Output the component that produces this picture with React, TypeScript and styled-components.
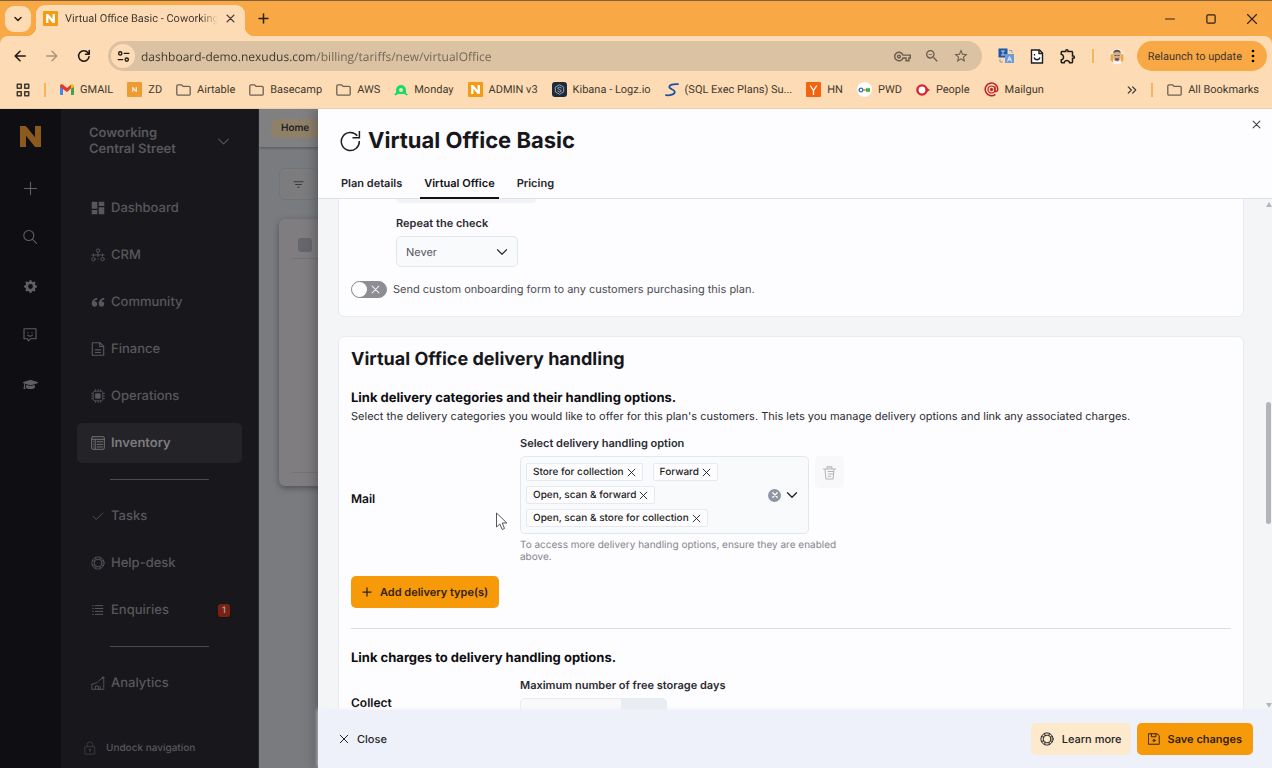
import React from "react";
import styled, { createGlobalStyle } from "styled-components";
import {
  MdDashboard,
  MdFilterList,
  MdOutlineExtension,
  MdOutlineVpnKey,
  MdStarBorder,
  MdZoomOut,
} from "react-icons/md";
import { ImQuotesLeft } from "react-icons/im";
import { BsGearFill } from "react-icons/bs";
import { FaGraduationCap } from "react-icons/fa";

const Global = createGlobalStyle`
  *, *::before, *::after { box-sizing: border-box; }
  html, body, #root { height: 100%; }
  body { margin: 0; overflow: hidden; font-family: Inter, "Liberation Sans", sans-serif; font-size: 11px; color: #1d1d21; text-rendering: geometricPrecision; }
  button, input, select { font: inherit; color: inherit; text-rendering: inherit; }
  button { border: 0; padding: 0; background: none; cursor: pointer; }
  a { color: inherit; text-decoration: none; }
  h1, h2, h3, p, ul { margin: 0; padding: 0; }
  svg { display: block; flex: none; }
`;

const Page = styled.div`
  display: flex;
  flex-direction: column;
  height: 100vh;
`;

/* ---------- browser window ---------- */

const Chrome = styled.header`
  flex: none;
  background: #f9a846;
  border-top: 1px solid #80613c;
  border-bottom: 1px solid #e8d0ae;
  font-family: Roboto, "Open Sans", sans-serif;
  font-size: 11px;
  color: #43392e;
`;

const TabStrip = styled.div`
  display: flex;
  align-items: center;
  height: 35px;
  padding-left: 5px;
`;

const TabSearch = styled.button`
  display: grid;
  place-items: center;
  width: 26px;
  height: 26px;
  border-radius: 9px;
  background: #fddcb5;
  color: #2a2118;
`;

const BrowserTab = styled.div`
  position: relative;
  display: flex;
  align-items: center;
  align-self: flex-end;
  width: 209px;
  height: 31px;
  margin-left: 5px;
  padding: 0 10px 4px 7px;
  border-radius: 9px 9px 0 0;
  background: #fddcb5;
  &::before, &::after {
    content: "";
    position: absolute;
    bottom: 0;
    width: 9px;
    height: 9px;
  }
  &::before { left: -9px; background: radial-gradient(circle at 0 0, transparent 9px, #fddcb5 9px); }
  &::after { right: -9px; background: radial-gradient(circle at 100% 0, transparent 9px, #fddcb5 9px); }
`;

const TabTitle = styled.span`
  flex: 1;
  min-width: 0;
  margin: 0 8px 0 7px;
  overflow: hidden;
  white-space: nowrap;
  mask-image: linear-gradient(90deg, #000 88%, transparent);
`;

const PlainButton = styled.button`
  display: grid;
  place-items: center;
`;

const NewTab = styled(PlainButton)`
  margin-left: 13px;
  color: #2a2118;
`;

const WindowButtons = styled.div`
  display: flex;
  gap: 29px;
  margin-left: auto;
  padding-right: 14px;
  color: #2a2118;
`;

const Toolbar = styled.div`
  display: flex;
  align-items: center;
  height: 40px;
  padding: 0 5px 0 13px;
  border-radius: 8px 8px 0 0;
  background: #fddcb5;
  color: #1f1a14;
`;

const NavButtons = styled.div`
  display: flex;
  gap: 18px;
  margin-right: 17px;
`;

const Omnibox = styled.div`
  display: flex;
  align-items: center;
  flex: 1;
  height: 30px;
  padding: 0 13px 0 3px;
  border-radius: 15px;
  background: #dbc2a3;
`;

const SiteInfo = styled(PlainButton)`
  width: 24px;
  height: 24px;
  border-radius: 12px;
  background: #fddcb5;
`;

const Address = styled.input`
  flex: 1;
  min-width: 0;
  margin-left: 6px;
  padding: 0;
  border: 0;
  outline: 0;
  font-family: "Open Sans", "Noto Sans", sans-serif;
  font-size: 12px;
  color: transparent;
  background: linear-gradient(90deg, #3c342a 173px, #6d6254 173px);
  background-clip: text;
`;

const OmniActions = styled.div`
  display: flex;
  align-items: center;
  gap: 13px;
  color: #6a5e50;
`;

const Extensions = styled.div`
  display: flex;
  align-items: center;
  gap: 15px;
  margin: 0 12px 0 16px;
`;

const Bar = styled.span`
  width: 2px;
  height: 14px;
  background: #f7b45f;
`;

const Relaunch = styled.button`
  display: flex;
  align-items: center;
  gap: 9px;
  height: 30px;
  padding: 0 12px 0 11px;
  border-radius: 15px;
  background: #f9a846;
  color: #43372a;
`;

const Bookmarks = styled.nav`
  display: flex;
  align-items: center;
  gap: 14px;
  height: 32px;
  padding: 0 13px 5px 16px;
  background: #fddcb5;
  white-space: nowrap;
`;

const Bookmark = styled.a`
  display: flex;
  align-items: center;
  gap: 6px;
`;

const Spacer = styled.span`
  flex: 1;
`;

const Tile = styled.span<{ $bg: string; $round?: number }>`
  display: grid;
  place-items: center;
  flex: none;
  width: 15px;
  height: 15px;
  border-radius: ${(p) => p.$round ?? 1}px;
  background: ${(p) => p.$bg};
`;

/* ---------- dashboard behind the drawer ---------- */

const Workspace = styled.div`
  position: relative;
  display: flex;
  flex: 1;
  min-height: 0;
  overflow: hidden;
`;

const Rail = styled.nav`
  display: grid;
  grid-auto-rows: 16px;
  justify-items: center;
  align-items: center;
  align-content: start;
  gap: 33px;
  flex: none;
  width: 61px;
  padding: 22px 1px 0 0;
  background: #0f0e12;
  color: #5f5e62;
`;

const RailLogo = styled.a`
  margin-bottom: 6px;
`;

const Sidebar = styled.aside`
  display: flex;
  flex-direction: column;
  flex: none;
  width: 198px;
  padding: 16px 16px 12px;
  background: #18171b;
  border-right: 1px solid #29292d;
  color: #58575b;
`;

const Location = styled.button`
  display: flex;
  align-items: center;
  justify-content: space-between;
  padding: 0 12px;
  text-align: left;
  font-size: 13px;
  font-weight: 600;
  line-height: 16px;
`;

const NavList = styled.ul`
  display: flex;
  flex-direction: column;
  gap: 7px;
  margin-top: 31px;
  list-style: none;
`;

const NavLink = styled.a<{ $active?: boolean }>`
  display: flex;
  align-items: center;
  gap: 6px;
  height: 40px;
  padding: 0 12px 0 14px;
  border-radius: 5px;
  font-size: 13px;
  font-weight: ${(p) => (p.$active ? 600 : 500)};
  color: ${(p) => (p.$active ? "#7c7b7f" : "#58575b")};
  background: ${(p) => (p.$active ? "#242327" : "transparent")};
`;

const NavRule = styled.li`
  height: 1px;
  margin: 9px 33px;
  background: #4b4a4e;
`;

const Count = styled.span`
  display: grid;
  place-items: center;
  width: 12px;
  height: 13px;
  margin-left: auto;
  border-radius: 3px;
  background: #7c200f;
  font-size: 9px;
  font-weight: 600;
  color: #8fa0bb;
`;

const Undock = styled.button`
  display: flex;
  align-items: center;
  gap: 9px;
  margin-top: auto;
  padding: 0 6px;
  font-size: 10px;
  font-weight: 500;
  line-height: 16px;
  svg { color: #3f3e42; }
`;

const Backdrop = styled.main`
  flex: 1;
  min-width: 0;
  background: #7a7b7f;
`;

const BackHeader = styled.div`
  display: flex;
  align-items: center;
  height: 38px;
  padding-left: 12px;
  background: #807f82;
  box-shadow: 0 1px 3px rgba(0, 0, 0, 0.3);
`;

const HomeLink = styled.a`
  padding: 0 10px;
  border-radius: 5px;
  background: #8f8069;
  font-size: 10px;
  font-weight: 500;
  line-height: 19px;
  color: #151416;
`;

const FilterButton = styled(PlainButton)`
  width: 39px;
  height: 32px;
  margin: 21px 0 0 20px;
  border: 1px solid #737478;
  border-radius: 5px;
  background: #7c7c7f;
  color: #37373c;
`;

const BackCard = styled.div`
  display: flex;
  flex-direction: column;
  justify-content: space-between;
  height: 267px;
  margin: 19px 0 0 20px;
  padding: 19px 0 13px 13px;
  border-radius: 6px 0 0 6px;
  background: #807d80;
  box-shadow: 0 2px 6px rgba(0, 0, 0, 0.35);
`;

const BackRow = styled.div`
  border-bottom: 1px solid #737276;
`;

const RowCheck = styled.input`
  appearance: none;
  display: block;
  width: 14px;
  height: 14px;
  margin: 0 0 6px 6px;
  border-radius: 3px;
  background: #66676c;
`;

/* ---------- drawer ---------- */

const Drawer = styled.section`
  position: absolute;
  top: 0;
  right: 0;
  bottom: 0;
  display: flex;
  flex-direction: column;
  width: 75%;
  background: #f4f5f7;
  box-shadow: -2px 0 12px rgba(0, 0, 0, 0.3);
`;

const DrawerHead = styled.header`
  display: flex;
  flex-direction: column;
  justify-content: space-between;
  flex: none;
  height: 90px;
  padding: 11px 11px 0 19px;
  background: #fdfcff;
  border-bottom: 1px solid #dde1e8;
`;

const TitleRow = styled.div`
  display: flex;
  align-items: center;
  gap: 7px;
  padding: 5px 0 0 3px;
`;

const Title = styled.h1`
  flex: 1;
  font-size: 22px;
  font-weight: 700;
  line-height: 32px;
  color: #17171b;
`;

const DrawerClose = styled(PlainButton)`
  align-self: flex-start;
  margin-top: -5px;
  padding: 0 0 0 8px;
  color: #3c3c42;
`;

const Tabs = styled.div`
  display: flex;
  gap: 14px;
`;

const Tab = styled.button<{ $active?: boolean }>`
  height: 31px;
  margin-bottom: -1px;
  padding: 0 4px;
  border-bottom: 2px solid ${(p) => (p.$active ? "#111114" : "transparent")};
  font-weight: 600;
  color: ${(p) => (p.$active ? "#111114" : "#26262b")};
`;

const DrawerBody = styled.div`
  display: flex;
  flex: 1;
  min-height: 0;
  overflow: hidden;
`;

const Cards = styled.div`
  display: flex;
  flex-direction: column;
  gap: 19px;
  flex: 1;
  min-width: 0;
  margin-top: -42px;
  padding: 0 21px 0 20px;
`;

const Card = styled.div`
  flex: none;
  padding: 13px 12px 18px;
  border: 1px solid #e8ebf1;
  border-radius: 6px;
  background: #fdfcff;
`;

const Field = styled.div<{ $indent?: boolean }>`
  display: flex;
  flex-direction: column;
  align-items: flex-start;
  gap: 5px;
  padding-left: ${(p) => (p.$indent ? 45 : 0)}px;
`;

const Label = styled.label`
  font-weight: 600;
  line-height: 16px;
  color: #2b2b30;
`;

const HiddenInput = styled.input`
  width: 141px;
  height: 32px;
  margin-bottom: 7px;
  border: 0;
  border-radius: 5px;
  background: #f1f3f7;
`;

const SelectWrap = styled.div`
  position: relative;
  width: 122px;
  svg { position: absolute; right: 10px; top: 10px; pointer-events: none; color: #333338; }
`;

const Select = styled.select`
  appearance: none;
  width: 100%;
  height: 31px;
  padding: 0 9px;
  border: 1px solid #e2e7ef;
  border-radius: 5px;
  background: #f9fafc;
  color: #56575d;
`;

const SwitchRow = styled.label`
  display: flex;
  align-items: center;
  gap: 6px;
  margin-top: 14px;
  line-height: 17px;
  color: #4b4c52;
`;

const SwitchWrap = styled.span`
  position: relative;
  svg { position: absolute; right: 7px; top: 4px; color: #f1f1f4; }
`;

const Switch = styled.input`
  appearance: none;
  display: block;
  width: 36px;
  height: 17px;
  margin: 0;
  border: 1px solid #8d8d93;
  border-radius: 9px;
  background: #8d8d93;
  &::before {
    content: "";
    display: block;
    width: 15px;
    height: 15px;
    border-radius: 50%;
    background: #fdfcff;
  }
`;

const SectionTitle = styled.h2`
  font-size: 18px;
  font-weight: 700;
  line-height: 20px;
  color: #17171b;
`;

const SubTitle = styled.h3`
  font-size: 13px;
  font-weight: 700;
  line-height: 18px;
  color: #0d0d10;
`;

const Intro = styled.p`
  line-height: 18px;
  color: #2c2c31;
`;

const Block = styled.div`
  margin-top: 19px;
`;

const OptionRow = styled.div`
  display: grid;
  grid-template-columns: 169px 1fr;
  align-items: center;
  margin-top: 10px;
`;

const RowName = styled.span`
  font-size: 12px;
  font-weight: 600;
  line-height: 16px;
  color: #0d0d10;
`;

const PickerRow = styled.div`
  display: flex;
  align-items: flex-start;
  gap: 6px;
`;

const Picker = styled.div`
  display: flex;
  align-items: center;
  justify-content: space-between;
  width: 289px;
  padding: 6px 10px 6px 5px;
  border: 1px solid #e2e7ef;
  border-radius: 5px;
  background: #f9fafc;
`;

const Chips = styled.div`
  display: flex;
  flex-wrap: wrap;
  gap: 5px 10px;
  width: 210px;
`;

const Chip = styled.span`
  display: flex;
  align-items: center;
  gap: 3px;
  height: 18px;
  padding: 0 6px;
  border: 1px solid #e6e9ef;
  border-radius: 2px;
  background: #fdfcff;
  font-size: 10px;
  font-weight: 500;
  color: #1d1d21;
`;

const PickerActions = styled.div`
  display: flex;
  align-items: center;
  gap: 5px;
`;

const ClearAll = styled(PlainButton)`
  width: 13px;
  height: 13px;
  border-radius: 50%;
  background: #8e96a3;
  color: #fff;
`;

const Trash = styled(PlainButton)`
  width: 29px;
  height: 32px;
  border-radius: 5px;
  background: #f8f8fa;
  color: #b3b4b9;
`;

const Help = styled.p`
  max-width: 320px;
  font-size: 10px;
  line-height: 12px;
  color: #85868d;
`;

const Button = styled.button<{ $tone: "primary" | "soft" | "plain" }>`
  display: inline-flex;
  align-items: center;
  gap: 8px;
  height: 32px;
  padding: 0 ${(p) => ({ plain: 2, soft: 9, primary: 11 })[p.$tone]}px;
  border-radius: 5px;
  font-weight: ${(p) => (p.$tone === "primary" ? 600 : 500)};
  color: ${(p) => (p.$tone === "primary" ? "#33200a" : "#232328")};
  background: ${(p) =>
    p.$tone === "primary" ? "#f69a09" : p.$tone === "soft" ? "#fde9cb" : "transparent"};
`;

const CardActions = styled.div`
  margin-top: 13px;
`;

const Rule = styled.hr`
  height: 1px;
  margin: 20px 0;
  border: 0;
  background: #d7dce4;
`;

const Stepper = styled.div`
  display: flex;
  width: 147px;
  height: 31px;
  overflow: hidden;
  border: 1px solid #e8ebf1;
  border-radius: 5px;
  background: #e9ecf2;
`;

const StepInput = styled.input`
  width: 100px;
  border: 0;
  background: #f9f9fb;
`;

const ScrollRail = styled.div`
  display: flex;
  flex-direction: column;
  align-items: center;
  flex: none;
  width: 7px;
  padding: 3px 0 2px;
  color: #b5b6ba;
`;

const Space = styled.span<{ $grow: number }>`
  flex: ${(p) => p.$grow} 0 0;
`;

const Thumb = styled.span`
  flex: 122 0 0;
  width: 5px;
  border-radius: 3px;
  background: #b3b4b8;
`;

const DrawerFoot = styled.footer`
  position: relative;
  display: flex;
  align-items: center;
  justify-content: space-between;
  flex: none;
  height: 58px;
  padding: 0 19px;
  background: #eef1fa;
  box-shadow: 0 -1px 4px rgba(238, 241, 250, 0.9);
`;

const Actions = styled.div`
  display: flex;
  gap: 6px;
`;

const Pointer = styled.svg`
  position: absolute;
  left: 177px;
  top: 403px;
`;

/* ---------- icons ---------- */

type IconProps = { size?: number; weight?: number; children?: React.ReactNode };

const Glyph = ({ size = 14, weight = 1, children }: IconProps) => (
  <svg
    width={size}
    height={size}
    viewBox="0 0 16 16"
    fill="none"
    stroke="currentColor"
    strokeWidth={weight}
    strokeLinecap="round"
    strokeLinejoin="round"
    aria-hidden="true"
  >
    {children}
  </svg>
);

const Cross = ({ size = 10, weight = 2 }: IconProps) => (
  <Glyph size={size} weight={weight}>
    <path d="M2 2l12 12M14 2L2 14" />
  </Glyph>
);

const Chevron = ({ size = 12, weight = 2 }: IconProps) => (
  <Glyph size={size} weight={weight}>
    <path d="M2 5l6 6 6-6" />
  </Glyph>
);

const Plus = ({ size = 10, weight = 2 }: IconProps) => (
  <Glyph size={size} weight={weight}>
    <path d="M8 1.500v13M1.500 8h13" />
  </Glyph>
);

const Buoy = ({ size = 14, weight = 1.1 }: IconProps) => (
  <Glyph size={size} weight={weight}>
    <circle cx="8" cy="8" r="7" />
    <circle cx="8" cy="8" r="4.400" />
    <path d="M1.800 5.200l2.500.7M5.200 1.800l.7 2.500M14.200 5.200l-2.500.7M10.800 1.800l-.7 2.500M1.800 10.800l2.500-.7M5.200 14.200l.7-2.500M14.200 10.800l-2.500-.7M10.800 14.200l-.7-2.500" />
  </Glyph>
);

const Folder = () => (
  <svg width="15" height="12" viewBox="0 0 15 12" fill="none" stroke="#6b6157" strokeWidth="1.300" aria-hidden="true">
    <path d="M.8 10V2C.8 1.300 1.300.8 2 .8h3.600L7 2.400h6c.7 0 1.200.5 1.200 1.200V10c0 .7-.5 1.200-1.200 1.200H2C1.300 11.200.8 10.700.8 10z" />
  </svg>
);

const NMark = ({ color = "#fff", size = 9, weight = 2.6 }: { color?: string; size?: number; weight?: number }) => (
  <svg width={size} height={size} viewBox="0 0 10 10" fill="none" stroke={color} strokeWidth={weight} aria-hidden="true">
    <path d="M1.400 10V0M8.600 10V0M1.600.8l6.800 8.400" />
  </svg>
);

/* ---------- data ---------- */

const bookmarks: { name: string; icon: React.ReactNode }[] = [
  {
    name: "GMAIL",
    icon: (
      <svg width="14" height="11" viewBox="0 0 14 11" aria-hidden="true">
        <path d="M0 2v8c0 .6.4 1 1 1h2V4.500z" fill="#4285f4" />
        <path d="M14 2v8c0 .6-.4 1-1 1h-2V4.500z" fill="#34a853" />
        <path d="M0 2C0 .4 1.600-.3 2.800.6L7 4 11.200.6 11 4.500 7 8 0 3z" fill="#e03a30" />
        <path d="M11 4.500V.8C12.300-.4 14 .4 14 2v1z" fill="#fbbc04" />
      </svg>
    ),
  },
  { name: "ZD", icon: <Tile $bg="#ee9b33"><NMark size={5} color="#fde3bd" /></Tile> },
  { name: "Airtable", icon: <Folder /> },
  { name: "Basecamp", icon: <Folder /> },
  { name: "AWS", icon: <Folder /> },
  {
    name: "Monday",
    icon: (
      <svg width="14" height="12" viewBox="0 0 14 12" aria-hidden="true">
        <path d="M2 9V6a5 5 0 0110 0v3l2 1.500-1.500 1-2-1.500H4l-2.500 1.500L0 10z" fill="#16dc69" />
        <circle cx="7" cy="6" r="2" fill="#fddcb5" />
      </svg>
    ),
  },
  { name: "ADMIN v3", icon: <Tile $bg="#f69a12"><NMark /></Tile> },
  {
    name: "Kibana - Logz.io",
    icon: (
      <Tile $bg="#1e2a3a" $round={3}>
        <svg width="11" height="11" viewBox="0 0 11 11" fill="none" stroke="#9fb3c8" strokeWidth=".9" aria-hidden="true">
          <path d="M5.500.7l4.200 2.400v4.800L5.500 10.300 1.300 7.900V3.100z" />
          <path d="M7.500 4.200L5.500 3 3.500 4.200 7.500 6.800 5.500 8 3.500 6.800" />
        </svg>
      </Tile>
    ),
  },
  {
    name: "(SQL Exec Plans) Su...",
    icon: (
      <svg width="14" height="14" viewBox="0 0 14 14" fill="none" stroke="#1f4fa3" strokeWidth="1.800" strokeLinecap="round" aria-hidden="true">
        <path d="M13 1.200C8 .8 4 2 4.300 4.200 4.600 6.200 10 6.500 9.800 9c-.2 2.600-4.500 3.600-8.800 3.200" />
      </svg>
    ),
  },
  {
    name: "HN",
    icon: (
      <Tile $bg="#f4640e">
        <svg width="9" height="10" viewBox="0 0 9 10" fill="none" stroke="#fff" strokeWidth="1.300" aria-hidden="true">
          <path d="M1.200.5l3.300 5 3.300-5M4.500 5.500V10" />
        </svg>
      </Tile>
    ),
  },
  {
    name: "PWD",
    icon: (
      <Tile $bg="#fff" $round={8}>
        <svg width="13" height="6" viewBox="0 0 13 6" aria-hidden="true">
          <circle cx="3" cy="3" r="1.900" fill="none" stroke="#2f6fc4" strokeWidth="1.400" />
          <path d="M5 3h3" stroke="#f08a24" strokeWidth="1.600" />
          <path d="M8 1.200h4v3.600H8z" fill="#3fb54a" />
        </svg>
      </Tile>
    ),
  },
  {
    name: "People",
    icon: (
      <svg width="14" height="12" viewBox="0 0 14 12" aria-hidden="true">
        <circle cx="6" cy="6" r="4.600" fill="#fff" stroke="#d8232f" strokeWidth="2.400" />
        <path d="M10 3.500L14 6l-4 2.500z" fill="#d8232f" />
      </svg>
    ),
  },
  {
    name: "Mailgun",
    icon: (
      <svg width="15" height="15" viewBox="0 0 15 15" fill="none" stroke="#c02126" aria-hidden="true">
        <circle cx="7.500" cy="7.500" r="1.200" strokeWidth="1" fill="#c02126" />
        <path d="M10.900 4.500v3.800c0 1.900 2.900 1.700 2.900-1a6.300 6.300 0 10-2.400 5" strokeWidth="1.500" />
        <circle cx="7.500" cy="7.500" r="3.500" strokeWidth="1.200" />
      </svg>
    ),
  },
];

const CrmIcon = () => (
  <Glyph>
    <circle cx="8" cy="3" r="2" />
    <circle cx="2.800" cy="12.800" r="2" />
    <circle cx="13.200" cy="12.800" r="2" />
    <path d="M8 5v5M1 8h14M2.800 6.800v2.500M13.200 6.800v2.500M8 12.800h.1" />
  </Glyph>
);

const FileIcon = () => (
  <Glyph weight={1.3}>
    <path d="M1.500.8h8.700L14.500 5v10.200h-13zM10 1v4.200h4.300M5 9h6M5 12h6" />
  </Glyph>
);

const ChipIcon = () => (
  <Glyph>
    <rect x="2.500" y="2.500" width="11" height="11" rx="2" />
    <rect x="5.500" y="5.500" width="5" height="5" fill="currentColor" />
    <path d="M5 .6v1.500M8 .6v1.500M11 .6v1.500M5 14v1.400M8 14v1.400M11 14v1.400M.6 5h1.500M.6 8h1.500M.6 11h1.500M14 5h1.400M14 8h1.400M14 11h1.400" />
  </Glyph>
);

const TableIcon = () => (
  <Glyph>
    <rect x=".8" y=".8" width="14.400" height="14.400" rx="1.500" />
    <path d="M1 3.800h14M4.800 4v11M3 6.500h.1M3 9.500h.1M3 12.500h.1M7 6.500h6M7 9.500h6M7 12.500h6" />
  </Glyph>
);

const CheckIcon = () => (
  <Glyph>
    <path d="M2.500 8.500L6 12l7.500-7.500" />
  </Glyph>
);

const ListIcon = () => (
  <Glyph weight={1.1}>
    <path d="M2 3h.8M2 6.300h.8M2 9.600h.8M2 13h.8M5 3h8.500M5 6.300h8.500M5 9.600h8.500M5 13h8.500" />
  </Glyph>
);

const ChartIcon = () => (
  <Glyph>
    <path d="M1 9.500L7 7.500 9.500 5 13.500 2M1 9.500v5.700h13.600V3M5 15v-3.500h3.500V15M10.500 12v3" />
    <circle cx="13.700" cy="1.900" r="1" />
  </Glyph>
);

const LockIcon = () => (
  <Glyph>
    <path d="M2.500 6.500h11v8.500h-11zM4.800 6.500V4.200a3.200 3.200 0 016.400 0v2.300M8 10v2" />
    <circle cx="8" cy="10" r=".8" fill="currentColor" />
  </Glyph>
);

const navItems: ({ name: string; icon: React.ReactNode; active?: boolean; count?: number } | null)[] = [
  { name: "Dashboard", icon: <MdDashboard size={14} viewBox="2 2 20 20" /> },
  { name: "CRM", icon: <CrmIcon /> },
  { name: "Community", icon: <ImQuotesLeft size={14} viewBox="0 -1 16 18" /> },
  { name: "Finance", icon: <FileIcon /> },
  { name: "Operations", icon: <ChipIcon /> },
  { name: "Inventory", icon: <TableIcon />, active: true },
  null,
  { name: "Tasks", icon: <CheckIcon /> },
  { name: "Help-desk", icon: <Buoy weight={1} /> },
  { name: "Enquiries", icon: <ListIcon />, count: 1 },
  null,
  { name: "Analytics", icon: <ChartIcon /> },
];

const handlingOptions = ["Store for collection", "Forward", "Open, scan & forward", "Open, scan & store for collection"];

/* ---------- parts ---------- */

const BrowserChrome = () => (
  <Chrome>
    <TabStrip>
      <TabSearch aria-label="Search tabs"><Chevron size={8} weight={3} /></TabSearch>
      <BrowserTab>
        <Tile $bg="#f69a12"><NMark /></Tile>
        <TabTitle>Virtual Office Basic - Coworking</TabTitle>
        <PlainButton aria-label="Close tab"><Cross size={9} weight={2.4} /></PlainButton>
      </BrowserTab>
      <NewTab aria-label="New tab"><Plus size={11} weight={2.2} /></NewTab>
      <WindowButtons>
        <PlainButton aria-label="Minimise"><Glyph size={12} weight={1.3}><path d="M2 8h12" /></Glyph></PlainButton>
        <PlainButton aria-label="Maximise">
          <Glyph size={12} weight={1.6}><rect x="2.500" y="2.500" width="11" height="11" rx="1.500" /></Glyph>
        </PlainButton>
        <PlainButton aria-label="Close window"><Cross size={12} weight={1.5} /></PlainButton>
      </WindowButtons>
    </TabStrip>
    <Toolbar>
      <NavButtons>
        <PlainButton aria-label="Back"><Glyph size={14} weight={1.8}><path d="M14 8H2.500M8 2.500L2.500 8 8 13.500" /></Glyph></PlainButton>
        <PlainButton aria-label="Forward" disabled>
          <Glyph size={14} weight={1.6}><path d="M2 8h11.500M8 2.500L13.500 8 8 13.500" stroke="#a8937b" /></Glyph>
        </PlainButton>
        <PlainButton aria-label="Reload">
          <Glyph size={14} weight={1.8}><path d="M13.800 8.800A6 6 0 1112.600 4.300L14 5.800M14 1.800v4.200H9.800" /></Glyph>
        </PlainButton>
      </NavButtons>
      <Omnibox>
        <SiteInfo aria-label="Site information">
          <Glyph size={13} weight={1.7}>
            <circle cx="4" cy="4.200" r="2" /><path d="M9 4.200h5.500M1.500 11.800H7" /><circle cx="12" cy="11.800" r="2" />
          </Glyph>
        </SiteInfo>
        <Address aria-label="Address" defaultValue="dashboard-demo.nexudus.com/billing/tariffs/new/virtualOffice" />
        <OmniActions>
          <MdOutlineVpnKey size={17} />
          <MdZoomOut size={16} />
          <MdStarBorder size={16} />
        </OmniActions>
      </Omnibox>
      <Extensions>
        <svg width="17" height="16" viewBox="0 0 17 16" aria-hidden="true">
          <rect x=".5" y=".5" width="9" height="9" fill="#1f56a5" />
          <path d="M3 3h4M3 7h4M5 3v4" stroke="#b7cbe8" strokeWidth="1" />
          <rect x="7" y="6" width="9" height="9" fill="#6d9bd8" />
          <path d="M9.500 13.500l2-5 2 5M10.300 11.800h2.400" stroke="#eef4ff" fill="none" />
          <path d="M11 2.500h3v2.500M2 11v3h3" stroke="#9b9a98" fill="none" />
        </svg>
        <svg width="14" height="15" viewBox="0 0 14 15" fill="none" stroke="#1d1d21" strokeWidth="1.400" aria-hidden="true">
          <path d="M1.500 1h8L12.500 4v10h-11z" fill="#fff" />
          <path d="M9 1v3.500h3.500M4 8.500c1 3 5 3 6 0M4.500 5v1.500" />
        </svg>
        <MdOutlineExtension size={18} />
        <Bar />
        <svg width="16" height="17" viewBox="0 0 16 17" aria-hidden="true">
          <circle cx="8" cy="8.500" r="7.800" fill="#f7e9d8" />
          <path d="M2.500 14c.5-2 10.500-2 11 0a8 8 0 01-11 0z" fill="#f6f6f6" />
          <path d="M1.500 6.500v6l2.500 2V6z" fill="#f2a53f" /><path d="M14.500 6.500v6l-2.500 2V6z" fill="#f2a53f" />
          <path d="M4.300 5c0-3.500 7.400-3.500 7.400 0v5c0 4.500-7.400 4.500-7.400 0z" fill="#d3ad90" />
          <path d="M4.300 5C4 .5 12 .5 11.700 5 10 3.500 6 3.500 4.300 5zM6 10.500c1-.8 3-.8 4 0V12c-1 1-3 1-4 0z" fill="#6f5444" />
          <path d="M5.500 7.500h2M8.500 7.500h2" stroke="#4a372c" strokeWidth=".8" />
        </svg>
      </Extensions>
      <Relaunch>
        Relaunch to update
        <svg width="4" height="14" viewBox="0 0 4 14" aria-hidden="true">
          <circle cx="2" cy="2" r="1.300" /><circle cx="2" cy="7" r="1.300" /><circle cx="2" cy="12" r="1.300" />
        </svg>
      </Relaunch>
    </Toolbar>
    <Bookmarks aria-label="Bookmarks">
      <Bookmark href="#apps" aria-label="Apps">
        <Glyph size={14} weight={1.8}>
          <path d="M1.500 1.500h4.500V6H1.500zM10 1.500h4.500V6H10zM1.500 10h4.500v4.500H1.500zM10 10h4.500v4.500H10z" />
        </Glyph>
      </Bookmark>
      <Bar />
      {bookmarks.map((b) => (
        <Bookmark key={b.name} href={"#" + b.name}>{b.icon}{b.name}</Bookmark>
      ))}
      <Spacer />
      <PlainButton aria-label="More bookmarks"><Glyph size={10} weight={2}><path d="M2 3l5 5-5 5M9 3l5 5-5 5" /></Glyph></PlainButton>
      <Bar />
      <Bookmark href="#all"><Folder />All Bookmarks</Bookmark>
    </Bookmarks>
  </Chrome>
);

const Navigation = () => (
  <>
    <Rail aria-label="Shortcuts">
      <RailLogo href="#home" aria-label="Nexudus home"><NMark size={21} color="#8c5a1c" weight={2.9} /></RailLogo>
      <PlainButton aria-label="Add"><Plus size={15} weight={1.2} /></PlainButton>
      <PlainButton aria-label="Search">
        <Glyph size={16} weight={1.1}><circle cx="6.800" cy="6.500" r="5" /><path d="M10.600 10.400L14.500 14.300" /></Glyph>
      </PlainButton>
      <PlainButton aria-label="Settings"><BsGearFill size={13} /></PlainButton>
      <PlainButton aria-label="Feedback">
        <Glyph size={16} weight={1.1}>
          <path d="M2 1.800h12v10H8.500L6.500 14l-1-2.200H2zM6 5.500v.3M10 5.500v.3M5.500 8c1 1.500 4 1.500 5 0" />
        </Glyph>
      </PlainButton>
      <PlainButton aria-label="Academy"><FaGraduationCap size={15} /></PlainButton>
    </Rail>
    <Sidebar>
      <Location><span>Coworking<br />Central Street</span><Chevron size={13} weight={1.3} /></Location>
      <NavList>
        {navItems.map((item, i) =>
          item ? (
            <li key={item.name}>
              <NavLink href={"#" + item.name} $active={item.active}>
                {item.icon}
                {item.name}
                {item.count && <Count>{item.count}</Count>}
              </NavLink>
            </li>
          ) : (
            <NavRule key={i} role="separator" />
          )
        )}
      </NavList>
      <Undock><LockIcon />Undock navigation</Undock>
    </Sidebar>
  </>
);

const PlanDrawer = () => (
  <Drawer aria-label="Virtual Office Basic">
    <DrawerHead>
      <TitleRow>
        <svg width="21" height="21" viewBox="0 0 21 21" fill="none" stroke="#1d1d21" strokeWidth="1.500" aria-hidden="true">
          <path d="M19.400 0v6.800H12.500M17.300 4.800A9 9 0 1019.300 10" />
        </svg>
        <Title>Virtual Office Basic</Title>
        <DrawerClose aria-label="Close panel"><Cross size={9} weight={1.8} /></DrawerClose>
      </TitleRow>
      <Tabs role="tablist">
        <Tab role="tab">Plan details</Tab>
        <Tab role="tab" aria-selected $active>Virtual Office</Tab>
        <Tab role="tab">Pricing</Tab>
      </Tabs>
    </DrawerHead>
    <DrawerBody>
      <Cards>
        <Card>
          <Field $indent>
            <HiddenInput aria-label="Check document" />
            <Label htmlFor="repeat">Repeat the check</Label>
            <SelectWrap>
              <Select id="repeat" defaultValue="Never"><option>Never</option></Select>
              <Chevron size={12} weight={1.6} />
            </SelectWrap>
          </Field>
          <SwitchRow>
            <SwitchWrap><Switch type="checkbox" role="switch" /><Cross size={9} weight={1.8} /></SwitchWrap>
            Send custom onboarding form to any customers purchasing this plan.
          </SwitchRow>
        </Card>
        <Card>
          <SectionTitle>Virtual Office delivery handling</SectionTitle>
          <Block>
            <SubTitle>Link delivery categories and their handling options.</SubTitle>
            <Intro>
              Select the delivery categories you would like to offer for this plan's customers. This lets you manage
              delivery options and link any associated charges.
            </Intro>
          </Block>
          <OptionRow>
            <RowName>Mail</RowName>
            <Field>
              <Label as="span" id="handling">Select delivery handling option</Label>
              <PickerRow>
                <Picker role="group" aria-labelledby="handling">
                  <Chips>
                    {handlingOptions.map((o) => (
                      <Chip key={o}>{o}<PlainButton aria-label={"Remove " + o}><Cross size={9} weight={1.6} /></PlainButton></Chip>
                    ))}
                  </Chips>
                  <PickerActions>
                    <ClearAll aria-label="Clear all"><Cross size={6} weight={3.4} /></ClearAll>
                    <PlainButton aria-label="Show options"><Chevron size={12} weight={1.6} /></PlainButton>
                  </PickerActions>
                </Picker>
                <Trash aria-label="Delete Mail">
                  <Glyph size={15} weight={1.1}>
                    <path d="M1.500 4.200h13M5.500 4V2h5v2M3.200 4.500L4.200 15h7.600l1-10.500M6.500 7h5M6.800 9.500h4.500M6.800 12h2.500" />
                  </Glyph>
                </Trash>
              </PickerRow>
              <Help>To access more delivery handling options, ensure they are enabled above.</Help>
            </Field>
          </OptionRow>
          <CardActions>
            <Button $tone="primary"><Plus size={10} weight={2} />Add delivery type(s)</Button>
          </CardActions>
          <Rule />
          <SubTitle>Link charges to delivery handling options.</SubTitle>
          <OptionRow>
            <RowName>Collect</RowName>
            <Field>
              <Label htmlFor="days">Maximum number of free storage days</Label>
              <Stepper><StepInput id="days" /></Stepper>
            </Field>
          </OptionRow>
        </Card>
      </Cards>
      <ScrollRail aria-hidden="true">
        <svg width="6" height="5" viewBox="0 0 6 5"><path d="M0 5l3-5 3 5z" fill="currentColor" /></svg>
        <Space $grow={194} />
        <Thumb />
        <Space $grow={178} />
        <svg width="6" height="5" viewBox="0 0 6 5"><path d="M0 0l3 5 3-5z" fill="currentColor" /></svg>
      </ScrollRail>
    </DrawerBody>
    <DrawerFoot>
      <Button $tone="plain"><Cross size={10} weight={1.6} />Close</Button>
      <Actions>
        <Button $tone="soft"><Buoy />Learn more</Button>
        <Button $tone="primary">
          <Glyph size={12} weight={1.3}>
            <path d="M1 1h11l3 2.500V15H1zM4.500 1v4h6V1" /><circle cx="8" cy="10" r="1.400" />
          </Glyph>
          Save changes
        </Button>
      </Actions>
    </DrawerFoot>
    <Pointer width="13" height="19" viewBox="0 0 13 19" aria-hidden="true">
      <path d="M1.500 1v14l3.300-3 2.400 5.500 2.300-1L7.200 11h4.600z" fill="#fff" stroke="#55555a" />
    </Pointer>
  </Drawer>
);

export default function App() {
  return (
    <Page>
      <Global />
      <BrowserChrome />
      <Workspace>
        <Navigation />
        <Backdrop>
          <BackHeader><HomeLink href="#home">Home</HomeLink></BackHeader>
          <FilterButton aria-label="Filter"><MdFilterList size={13} /></FilterButton>
          <BackCard>
            <BackRow><RowCheck type="checkbox" aria-label="Select all" /></BackRow>
            <BackRow />
          </BackCard>
        </Backdrop>
        <PlanDrawer />
      </Workspace>
    </Page>
  );
}
